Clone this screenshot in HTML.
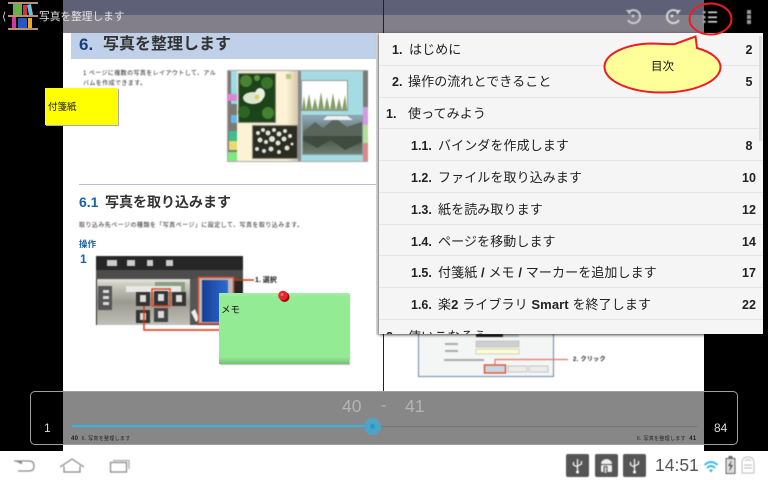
<!DOCTYPE html>
<html lang="ja">
<head>
<meta charset="utf-8">
<style>
html,body{margin:0;padding:0;background:#000;}
#r{position:relative;width:768px;height:480px;overflow:hidden;background:#000;font-family:"Liberation Sans","Noto Sans CJK JP",sans-serif;}
#r div,#r span{position:absolute;white-space:nowrap;}
.d{color:#222;font-size:6px;line-height:8px;letter-spacing:.4px;}
.soft{filter:blur(.5px);}
#toc{left:379px;top:33px;width:384px;height:301px;background:#f5f5f5;overflow:hidden;box-shadow:0 1px 3px rgba(0,0,0,.75);}
.sep{left:0;width:384px;height:1px;background:#e4e4e4;}
.t{font-size:13px;line-height:18px;color:#222;letter-spacing:.1px;}
.n{font-size:12.5px;line-height:18px;font-weight:bold;color:#222;}
.p{font-size:12.5px;line-height:18px;font-weight:bold;color:#222;width:40px;text-align:center;left:350px;}
</style>
</head>
<body>
<div id="r">
<!-- page -->
<div style="left:63px;top:0;width:641px;height:451px;background:#fff"></div>
<div style="left:376px;top:33px;width:3px;height:302px;background:#dcdcdc"></div>
<div style="left:383px;top:0;width:1px;height:391px;background:#222"></div>
<div style="left:71px;top:32px;width:305px;height:27px;background:#bfd0e8"></div>
<div style="left:79px;top:32px;font-size:17px;line-height:26px;font-weight:bold;color:#17417c">6.</div>
<div style="left:103px;top:32px;font-size:16px;line-height:26px;font-weight:bold;color:#333">写真を整理します</div>
<div class="d soft" style="left:83px;top:70px;">1 ページに複数の写真をレイアウトして、アル</div>
<div class="d soft" style="left:83px;top:80px;">バムを作成できます。</div>

<!-- album -->
<svg class="soft" style="position:absolute;left:227px;top:70px" width="141" height="92" viewBox="0 0 141 92">
<defs>
<linearGradient id="cr" x1="0" x2="1"><stop offset="0" stop-color="#fdf2d4"/><stop offset=".8" stop-color="#fdf2d4"/><stop offset="1" stop-color="#cfc4a6"/></linearGradient>
<linearGradient id="sky" x1="0" x2="0" y1="0" y2="1"><stop offset="0" stop-color="#8fa9bd"/><stop offset=".45" stop-color="#62705f"/><stop offset=".55" stop-color="#48523f"/><stop offset="1" stop-color="#6c7f73"/></linearGradient>
</defs>
<rect width="141" height="92" fill="#a9a9a9"/>
<rect x="1" y="1" width="10" height="90" fill="#7c7a74"/>
<rect x="4" y="1" width="6" height="30" fill="#9fdce6"/>
<rect x="4" y="20" width="6" height="14" fill="#88e0e0"/>
<rect y="24" width="11" height="7" fill="#d987d6"/>
<rect x="4" y="45" width="8" height="8" fill="#66b9e6"/>
<rect x="2" y="61" width="9" height="10" fill="#3dbd90"/>
<rect x="2" y="71" width="9" height="9" fill="#e8dc70"/>
<rect x="1" y="82" width="10" height="9" fill="#80e880"/>
<rect x="10" y="1" width="62" height="90" fill="url(#cr)"/>
<rect x="73" y="1" width="63" height="90" fill="#a5dbe2"/>
<rect x="71" y="1" width="3" height="90" fill="#8a8a8c"/>
<rect x="136" y="1" width="5" height="36" fill="#7b7a76"/>
<rect x="136" y="37" width="5" height="18" fill="#d39adf"/>
<rect x="136" y="55" width="5" height="18" fill="#b3e09a"/>
<rect x="136" y="73" width="5" height="18" fill="#d88a8a"/>
<rect x="11" y="3" width="38" height="50" fill="#8a8a80"/>
<rect x="12" y="4" width="36" height="48" fill="#1c441a"/>
<circle cx="19" cy="11" r="6" fill="#4a8232"/><circle cx="40" cy="13" r="6" fill="#3a7429"/><circle cx="17" cy="42" r="6" fill="#2c6622"/><circle cx="41" cy="43" r="6" fill="#44822f"/><circle cx="30" cy="8" r="3" fill="#5a9440"/>
<ellipse cx="26" cy="28" rx="10" ry="6" fill="#dfe6d0"/><ellipse cx="33" cy="24" rx="5" ry="6" fill="#eceee2"/><circle cx="30" cy="27" r="2.500" fill="#d6d660"/>
<rect x="25" y="55" width="46" height="34" fill="#8a8a80"/>
<rect x="26" y="56" width="44" height="32" fill="#2c2d22"/>
<g fill="#e0e5d8"><circle cx="31" cy="63" r="2"/><circle cx="36" cy="60" r="2"/><circle cx="41" cy="63" r="2.500"/><circle cx="47" cy="60" r="2"/><circle cx="52" cy="64" r="2.500"/><circle cx="58" cy="61" r="2"/><circle cx="33" cy="70" r="2.500"/><circle cx="39" cy="72" r="2"/><circle cx="45" cy="69" r="3"/><circle cx="51" cy="73" r="2.500"/><circle cx="57" cy="69" r="2.500"/><circle cx="63" cy="66" r="2"/><circle cx="30" cy="79" r="2"/><circle cx="37" cy="81" r="2"/><circle cx="44" cy="79" r="2.500"/><circle cx="52" cy="82" r="2"/><circle cx="60" cy="78" r="2.500"/><circle cx="65" cy="74" r="1.500"/></g>
<rect x="74" y="10" width="47" height="31" fill="#8d9a9c"/>
<rect x="75" y="11" width="45" height="29" fill="#fff"/>
<path d="M75 40 L77 26 L79 40 L82 24 L85 40 L88 28 L91 40 L94 22 L97 40 L100 27 L103 40 L106 23 L109 40 L112 28 L115 40 L118 25 L120 40Z" fill="#84a068"/>
<rect x="75" y="45" width="61" height="40" fill="#8d9a9c"/>
<rect x="76" y="46" width="59" height="38" fill="url(#sky)"/>
<path d="M76 62 L88 52 L96 58 L108 48 L120 57 L135 52 V66 H76Z" fill="#59655a"/>
<path d="M76 70 L90 78 L104 70 L118 80 L135 72 V66 H76Z" fill="#3f4b3e"/>
<path d="M100 46 h20 l6 4 h-30z" fill="#eef2f4"/>
<rect x="59" y="4" width="5" height="5" fill="#b9c97c"/>
</svg>
<div style="left:79px;top:184px;width:297px;height:1px;background:#b4c0d6"></div>
<div style="left:79px;top:192px;font-size:14px;line-height:20px;font-weight:bold;color:#1a62a6">6.1</div>
<div style="left:105px;top:192px;font-size:14px;line-height:20px;font-weight:bold;color:#333">写真を取り込みます</div>
<div class="d soft" style="left:79px;top:222px;letter-spacing:.45px;">取り込み先ページの種類を「写真ページ」に設定して、写真を取り込みます。</div>
<div style="left:79px;top:238px;font-size:8.500px;line-height:12px;font-weight:bold;color:#1a62a6">操作</div>
<div style="left:80px;top:252px;font-size:12px;line-height:14px;font-weight:bold;color:#1a62a6">1</div>

<!-- mock screenshot -->
<svg class="soft" style="position:absolute;left:90px;top:250px" width="170" height="90" viewBox="0 0 170 90">
<defs><linearGradient id="bg" x1="0" x2="0" y1="0" y2="1"><stop offset="0" stop-color="#dcdcd0"/><stop offset=".5" stop-color="#9a9a90"/><stop offset="1" stop-color="#c0c0b8"/></linearGradient>
<linearGradient id="bl" x1="0" x2="1"><stop offset="0" stop-color="#163d96"/><stop offset="1" stop-color="#2f6bd0"/></linearGradient></defs>
<rect x="6" y="6" width="147" height="69" fill="#262626"/>
<rect x="6" y="20" width="147" height="9" fill="#4c4c4c"/>
<rect x="7" y="29" width="93" height="46" fill="url(#bg)"/>
<rect x="65" y="32" width="30" height="14" fill="#8aa080"/>
<rect x="7" y="30" width="103" height="2" fill="#ddd"/>
<rect x="8" y="36" width="14" height="24" fill="#555"/>
<g fill="#ddd"><rect x="13" y="40" width="6" height="3"/><rect x="13" y="46" width="6" height="3"/><rect x="13" y="52" width="6" height="3"/></g>
<rect x="36" y="36" width="55" height="6" fill="#e8e8e8"/>
<rect x="46" y="42" width="14" height="14" fill="#333"/><rect x="64" y="41" width="14" height="15" fill="#333"/><rect x="82" y="42" width="14" height="14" fill="#333"/>
<rect x="46" y="60" width="14" height="13" fill="#333"/><rect x="64" y="58" width="14" height="14" fill="#444"/>
<g fill="#ddd"><rect x="50" y="45" width="6" height="7"/><rect x="68" y="44" width="6" height="7"/><rect x="86" y="45" width="6" height="7"/><rect x="50" y="63" width="6" height="7"/><rect x="68" y="61" width="6" height="7"/></g>
<rect x="62" y="39" width="18" height="17" fill="none" stroke="#e0451c" stroke-width="1.500"/>
<rect x="100" y="29" width="8" height="46" fill="#555"/>
<path d="M101 62 l4 -3 l4 10 l-3 3z" fill="#eee"/>
<rect x="108" y="27" width="36" height="46" fill="#bbb"/>
<rect x="112" y="30" width="26" height="42" fill="url(#bl)"/>
<rect x="108.500" y="27.500" width="35" height="46" fill="none" stroke="#e0522c" stroke-width="1.500"/>
<path d="M144 30 H164" stroke="#cc3c14" stroke-width="1.400"/>
<path d="M54 56 V80 H130" stroke="#d8320e" stroke-width="1.400" fill="none"/>
<g fill="#ccc"><rect x="17" y="10" width="10" height="6"/><rect x="37" y="10" width="8" height="6"/><rect x="57" y="10" width="6" height="6"/><rect x="76" y="10" width="7" height="6"/></g>
</svg>
<div class="soft" style="left:255px;top:276px;font-size:7px;line-height:9px;font-weight:bold;color:#111">1. 選択</div>

<!-- lower right page fragment -->
<svg class="soft" style="position:absolute;left:410px;top:330px" width="170" height="50" viewBox="0 0 170 50">
<rect x="8.500" y="0" width="135" height="46.500" fill="#f4f6f6" stroke="#7d9bb5" stroke-width="1.200"/>
<rect x="66" y="4" width="27" height="3" fill="#222"/>
<rect x="93" y="4" width="16" height="3" fill="#ccc"/>
<rect x="66" y="11" width="43" height="6" fill="#cfcfcf" stroke="#aaa" stroke-width=".5"/>
<rect x="66" y="19" width="43" height="5" fill="#fefccc" stroke="#aaa" stroke-width=".5"/>
<rect x="35" y="13" width="13" height="2" fill="#aaa"/>
<rect x="35" y="20" width="13" height="2" fill="#aaa"/>
<rect x="34" y="29" width="40" height="2" fill="#aaa"/>
<rect x="74.500" y="35" width="21" height="8" fill="#c9d7e6" stroke="#e0522c" stroke-width="1.400"/>
<rect x="98" y="36" width="19" height="6" fill="#ececec" stroke="#aaa" stroke-width=".6"/>
<rect x="119" y="36" width="19" height="6" fill="#ececec" stroke="#aaa" stroke-width=".6"/>
<path d="M85 35 V29.500 H158" stroke="#e0785a" stroke-width="1.200" fill="none"/>
</svg>
<div class="soft" style="left:573px;top:356px;font-size:6px;line-height:9px;font-weight:bold;letter-spacing:.3px;color:#222">2. クリック</div>

<!-- top bars -->
<div style="left:63px;top:0;width:641px;height:15px;background:#5e6078"></div>
<div style="left:63px;top:15px;width:641px;height:18px;background:#837f89"></div>
<div style="left:383px;top:0;width:1px;height:33px;background:#222"></div>

<!-- logo -->
<svg style="position:absolute;left:6px;top:0" width="34" height="32" viewBox="0 0 34 32">
<rect x="2" y="2" width="30" height="2" fill="#b8926e"/>
<rect x="2" y="15" width="30" height="2" fill="#b8926e"/>
<rect x="2" y="28" width="30" height="2" fill="#b8926e"/>
<rect x="7" y="4" width="9" height="11" fill="#6ab04a"/>
<rect x="17" y="5" width="4" height="10" fill="#c63a3a"/>
<path d="M21 5 l4 -1 l2 11 h-4z" fill="#6cc0ea"/>
<rect x="6" y="17" width="4" height="11" fill="#d03a9a"/>
<rect x="12" y="18" width="9" height="10" fill="#2a56c0"/>
<rect x="22" y="18" width="4" height="10" fill="#f0a820"/>
</svg>
<div style="left:2px;top:10px;font-size:11px;line-height:14px;color:#ccc">&#10216;</div>
<div style="left:39px;top:9px;font-size:10.700px;line-height:16px;color:#e4e4e4">写真を整理します</div>

<!-- action icons -->
<svg class="soft" style="position:absolute;left:620px;top:2px" width="140" height="32" viewBox="0 0 140 32">
<g fill="none" stroke="#c9c9c9" stroke-width="2">
<path d="M9 10 A6.500 6.500 0 1 1 8 18"/>
<path d="M58 10 A6.500 6.500 0 1 0 59 18" stroke="#d6d6d6"/>
</g>
<path d="M6 8 l5 0 l-1 5z" fill="#c9c9c9"/><circle cx="13" cy="14" r="1.500" fill="#c9c9c9"/>
<path d="M61 8 l-5 0 l1 5z" fill="#d6d6d6"/><circle cx="52" cy="14" r="1.500" fill="#d6d6d6"/>
<g fill="#ddd"><rect x="88" y="9.500" width="9" height="1.600"/><rect x="88" y="14.500" width="9" height="1.600"/><rect x="88" y="19" width="9" height="1.600"/></g>
<g fill="#aaa"><rect x="83" y="9" width="2.500" height="2.500"/><rect x="83" y="14" width="2.500" height="2.500"/><rect x="83" y="18.500" width="2.500" height="2.500"/></g>
<g fill="#999"><rect x="127" y="8" width="4" height="4"/><rect x="127" y="13" width="4" height="4"/><rect x="127" y="18" width="4" height="4"/></g>
</svg>

<!-- stickies -->
<div style="left:45px;top:88px;width:73px;height:37px;background:#ff0;box-shadow:1px 1px 0 #aaa"></div>
<div style="left:48px;top:101px;font-size:9.500px;line-height:13px;color:#111">付箋紙</div>

<!-- TOC -->
<div id="toc">
<div class="sep" style="top:32px"></div><div class="sep" style="top:64px"></div><div class="sep" style="top:95px"></div><div class="sep" style="top:127px"></div><div class="sep" style="top:159px"></div><div class="sep" style="top:191px"></div><div class="sep" style="top:222px"></div><div class="sep" style="top:254px"></div><div class="sep" style="top:286px"></div>
<div style="left:380px;top:3px;width:3px;height:105px;background:#dcdcdc"></div>
<span class="n" style="left:13px;top:8px">1.</span><span class="t" style="left:30px;top:8px">はじめに</span><span class="p" style="top:8px">2</span>
<span class="n" style="left:13px;top:40px">2.</span><span class="t" style="left:29px;top:40px">操作の流れとできること</span><span class="p" style="top:40px">5</span>
<span class="n" style="left:7px;top:72px">1.</span><span class="t" style="left:29px;top:72px">使ってみよう</span>
<span class="n" style="left:32px;top:104px">1.1.</span><span class="t" style="left:59px;top:104px">バインダを作成します</span><span class="p" style="top:104px">8</span>
<span class="n" style="left:32px;top:136px">1.2.</span><span class="t" style="left:59px;top:136px">ファイルを取り込みます</span><span class="p" style="top:136px">10</span>
<span class="n" style="left:32px;top:168px">1.3.</span><span class="t" style="left:59px;top:168px">紙を読み取ります</span><span class="p" style="top:168px">12</span>
<span class="n" style="left:32px;top:200px">1.4.</span><span class="t" style="left:59px;top:200px">ページを移動します</span><span class="p" style="top:200px">14</span>
<span class="n" style="left:32px;top:231px">1.5.</span><span class="t" style="left:59px;top:231px">付箋紙 <b>/</b> メモ <b>/</b> マーカーを追加します</span><span class="p" style="top:231px">17</span>
<span class="n" style="left:32px;top:263px">1.6.</span><span class="t" style="left:59px;top:263px">楽<b>2</b> ライブラリ <b>Smart</b> を終了します</span><span class="p" style="top:263px">22</span>
<span class="n" style="left:7px;top:295px">2.</span><span class="t" style="left:29px;top:295px">使いこなそう</span>
</div>

<!-- memo -->
<div style="left:219px;top:293px;width:130px;height:71px;background:linear-gradient(#a4eea4 0,#93ec93 6%,#93ec93 90%,#74c074 100%);box-shadow:1px 1px 1px #bbb"></div>
<div style="left:221px;top:304px;font-size:9.500px;line-height:14px;color:#111">メモ</div>
<svg style="position:absolute;left:275px;top:288px" width="18" height="18" viewBox="0 0 18 18">
<circle cx="9.500" cy="9" r="5" fill="#8e0f12"/><circle cx="8" cy="7.500" r="4.800" fill="#e8242a"/><circle cx="7" cy="6.500" r="1.500" fill="#f26a6a"/>
</svg>

<!-- callout + circle -->
<svg style="position:absolute;left:0;top:0" width="768" height="120" viewBox="0 0 768 120">
<ellipse cx="710.500" cy="19" rx="21" ry="15.500" fill="none" stroke="#ee1c25" stroke-width="2"/>
<path d="M604.500 67 C604.500 53 628 44 650 43.500 C660 43.500 668 44.500 675 44 L695.500 36.500 L697 48 C711 52 720.500 59 720.500 67 C720.500 81 695 92.500 662 92.500 C630 92.500 604.500 81 604.500 67Z" fill="#ffff99" stroke="#ee1c25" stroke-width="2"/>
</svg>
<div style="left:651px;top:59px;font-size:11.500px;line-height:16px;color:#111">目次</div>

<!-- slider -->
<div style="left:63px;top:391px;width:641px;height:54px;background:#878787"></div>
<div style="left:30px;top:391px;width:706px;height:52px;border:1px solid #a0a0a0;border-radius:5px"></div>
<div style="left:342px;top:395px;font-size:17.500px;line-height:22px;color:#b4b4b4">40</div>
<div style="left:381px;top:395px;font-size:16px;line-height:22px;color:#b4b4b4">-</div>
<div style="left:405px;top:395px;font-size:17.500px;line-height:22px;color:#b4b4b4">41</div>
<div style="left:44px;top:421px;font-size:12px;line-height:15px;color:#ddd">1</div>
<div style="left:714px;top:421px;font-size:12px;line-height:15px;color:#ddd">84</div>
<div style="left:373px;top:426px;width:324px;height:1px;background:#757575"></div>
<div style="left:72px;top:425px;width:301px;height:2px;background:#33b5e5"></div>
<div style="left:364px;top:418px;width:17px;height:17px;border-radius:50%;background:#4fa3c6"></div>
<div style="left:370px;top:424px;width:5px;height:5px;border-radius:50%;background:#1c9bd0"></div>
<div style="left:71px;top:436px;font-size:5px;line-height:7px;letter-spacing:.3px;color:#222"><b style="font-size:6px">40</b>&nbsp; 6. 写真を整理します</div>
<div style="left:637px;top:436px;font-size:5px;line-height:7px;letter-spacing:.3px;color:#222">6. 写真を整理します&nbsp; <b style="font-size:6px">41</b></div>

<!-- system bar -->
<div style="left:0;top:451px;width:768px;height:29px;background:#fff"></div>
<svg class="soft" style="position:absolute;left:0;top:451px" width="768" height="29" viewBox="0 0 768 29">
<g fill="none" stroke="#8c8c8c" stroke-width="1.300">
<path d="M14 10 H29 Q34 10 34 15 Q34 20 29 20 H18"/>
<path d="M60 16 L72 8 L84 16 M64 15 V21 H80 V15"/>
<rect x="110.500" y="11.500" width="16" height="9.500"/>
<path d="M113 9.500 H129 V18" stroke="#aaa"/>
</g>
<path d="M14 9.500 L22 13.500 V9.500Z" fill="#8c8c8c"/>
<rect x="566" y="3" width="23" height="23" rx="2" fill="#555"/>
<rect x="595" y="3" width="23" height="23" rx="2" fill="#555"/>
<rect x="623" y="3" width="23" height="23" rx="2" fill="#555"/>
<g fill="none" stroke="#fff" stroke-width="1.200">
<path d="M577.500 8 V21 M573.500 11 V14 L577.500 16 M581.500 10 V13 L577.500 15"/>
<path d="M634.500 8 V21 M630.500 11 V14 L634.500 16 M638.500 10 V13 L634.500 15"/>
</g>
<circle cx="577.500" cy="21" r="1.500" fill="#fff"/><circle cx="634.500" cy="21" r="1.500" fill="#fff"/>
<path d="M601 13 a5.500 5 0 0 1 11 0z" fill="#eee"/>
<rect x="601" y="14" width="11" height="7" rx="1" fill="#eee"/>
<rect x="603.500" y="15" width="4" height="8" rx="1" fill="#555"/>
<rect x="604.500" y="16" width="2" height="6" fill="#ccc"/>
<g fill="none" stroke="#33b5e5" stroke-width="1.800">
<path d="M704.500 14 Q711 8 717.500 14"/><path d="M707 17 Q711 13 715 17"/>
</g>
<path d="M709 19 L711 21.500 L713 19 Q711 17.500 709 19Z" fill="#33b5e5"/>
<rect x="726" y="7.500" width="9" height="15" fill="#ddd" stroke="#666" stroke-width="1"/>
<rect x="728.500" y="5" width="4" height="2" fill="#666"/>
<path d="M732 9 L728 15 H730.500 L729 21 L733 14 H730.500Z" fill="#555"/>
<g fill="none" stroke="#c8c8c8" stroke-width="1.200">
<path d="M742 12 Q742 6 748 6 Q754 6 754 12 V22 H742Z"/>
<path d="M744 14 H752 M744 17 H752 M745 10 Q748 7 751 10"/>
</g>
</svg>
<div style="left:655px;top:454px;font-size:17.500px;line-height:22px;color:#555">14:51</div>
</div>
</body>
</html>
